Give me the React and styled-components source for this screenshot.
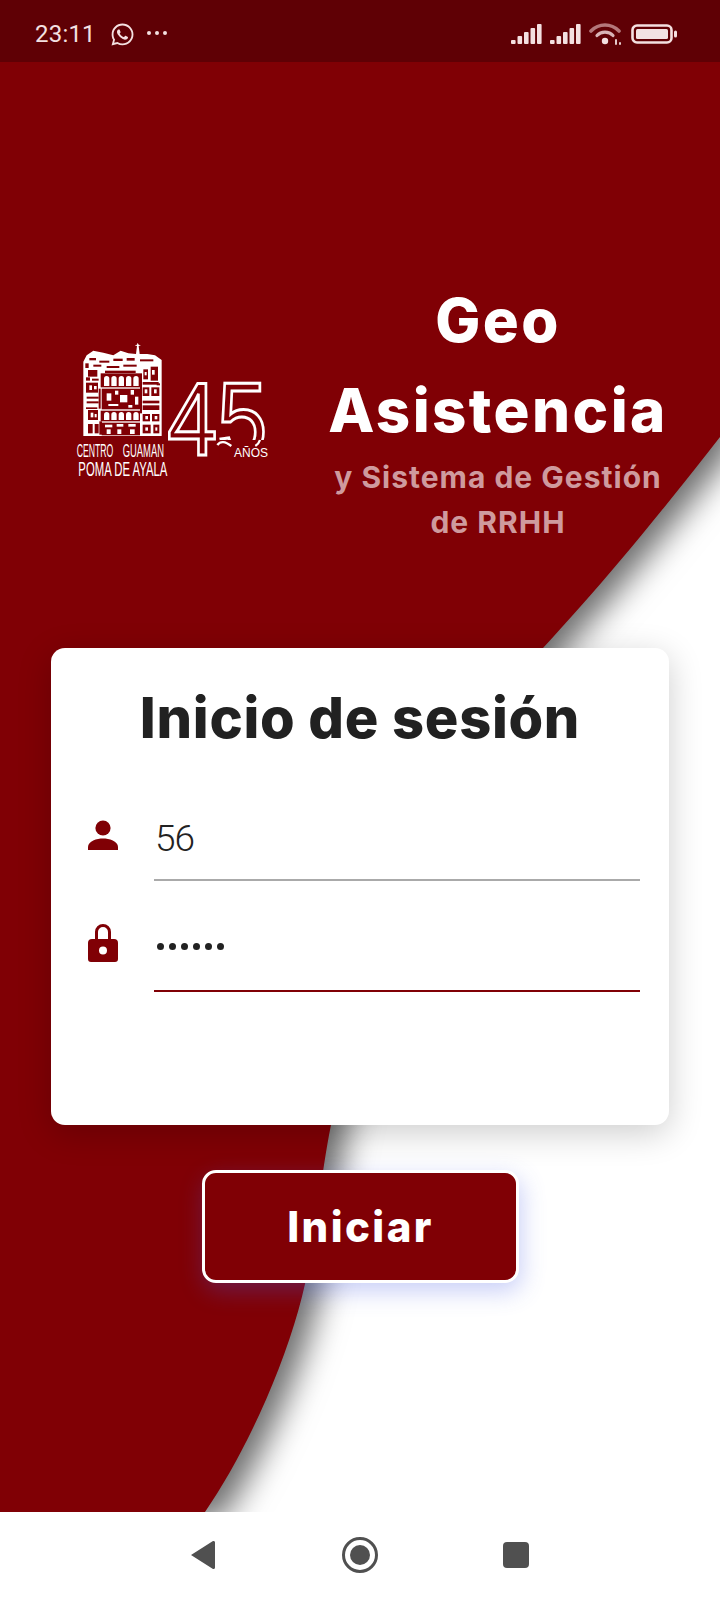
import React from 'react';
import styled, { createGlobalStyle } from 'styled-components';
import { FaWhatsapp } from 'react-icons/fa';

const RED = '#800005';

const GlobalStyle = createGlobalStyle`
  html, body {
    margin: 0;
    padding: 0;
    background: #fff;
  }
  body {
    font-family: "Inter", "Liberation Sans", sans-serif;
  }
`;

const Screen = styled.div`
  width: 720px;
  height: 1600px;
  display: flex;
  flex-direction: column;
  overflow: hidden;
`;

const StatusBar = styled.div`
  position: relative;
  z-index: 2;
  height: 62px;
  flex: none;
  background: #5f0005;
  display: flex;
  align-items: center;
  padding: 6px 43px 0 35px;
  color: #f4e0e1;
  box-sizing: border-box;
`;

const Time = styled.span`
  font-family: "Roboto", sans-serif;
  font-size: 24px;
  letter-spacing: 0.2px;
`;

const WhatsApp = styled(FaWhatsapp)`
  font-size: 25px;
  margin-left: 14px;
`;

const Dots = styled.div`
  display: flex;
  gap: 4px;
  margin-left: 12px;
  margin-bottom: 3px;
`;

const Dot = styled.i`
  width: 4px;
  height: 4px;
  border-radius: 50%;
  background: currentColor;
`;

const StatusRight = styled.div`
  margin-left: auto;
  margin-top: -1px;
  display: flex;
  align-items: center;
  gap: 8px;
`;

const Main = styled.main`
  position: relative;
  flex: 1;
  overflow: hidden;
  display: flex;
  flex-direction: column;
  align-items: center;
  background: #fff;
`;

const Curve = styled.svg`
  position: absolute;
  left: 0;
  top: 0;
  width: 720px;
  height: 1450px;
  overflow: visible;
  filter: drop-shadow(15px 9px 16px rgba(0, 0, 0, 0.58));
`;

const Hero = styled.section`
  position: relative;
  width: 720px;
  height: 586px;
  flex: none;
  display: flex;
  align-items: flex-start;
  box-sizing: border-box;
  padding-top: 213px;
`;

const LogoBox = styled.svg`
  width: 230px;
  height: 160px;
  flex: none;
  margin: 55px 0 0 60px;
`;

const TitleCol = styled.div`
  width: 360px;
  margin-left: 28px;
  text-align: center;
  color: #fff;
`;

const Title = styled.h1`
  margin: 0;
  font-size: 60px;
  font-weight: 800;
  line-height: 90px;
  letter-spacing: 2.4px;
`;

const Subtitle = styled.p`
  margin: 0;
  font-size: 30px;
  font-weight: 700;
  line-height: 45px;
  letter-spacing: 1px;
  color: #cf9a9e;
`;

const Card = styled.section`
  position: relative;
  width: 618px;
  height: 477px;
  flex: none;
  box-sizing: border-box;
  padding: 40px 29px 0 35px;
  background: #fff;
  border-radius: 14px;
  box-shadow: 0 8px 34px rgba(0, 0, 0, 0.2);
`;

const CardTitle = styled.h2`
  margin: 0 0 55px -6px;
  font-size: 56px;
  font-weight: 800;
  line-height: 60px;
  letter-spacing: 0.7px;
  color: #212121;
  text-align: center;
`;

const Field = styled.div`
  display: flex;
  align-items: flex-start;
  gap: 36px;
  height: 111px;
`;

const FieldIcon = styled.svg`
  width: 32px;
  height: 40px;
  flex: none;
  margin-top: ${(p) => p.$top}px;
  margin-left: 1px;
  margin-right: -1px;
  fill: ${RED};
`;

const FieldInput = styled.div`
  flex: 1;
  height: 78px;
  box-sizing: border-box;
  border-bottom: 2px solid ${(p) => (p.$active ? RED : '#aaaaaa')};
  padding-left: 1px;
  font-family: "Roboto", sans-serif;
  font-weight: 300;
  font-size: 37px;
  line-height: 71px;
  letter-spacing: -1px;
  color: #222;
`;

const PassDots = styled.div`
  display: flex;
  gap: 5px;
  padding: 29px 0 0 2px;
`;

const PassDot = styled.i`
  width: 7px;
  height: 7px;
  border-radius: 50%;
  background: #222;
`;

const LoginButton = styled.button`
  position: relative;
  width: 317px;
  height: 113px;
  flex: none;
  margin: 45px 0 0 1px;
  border: 3px solid #fff;
  border-radius: 14px;
  background: ${RED};
  color: #fff;
  font-family: inherit;
  font-size: 42px;
  font-weight: 800;
  letter-spacing: 2.4px;
  box-shadow: 2px 8px 24px rgba(70, 90, 230, 0.3);
`;

const NavBar = styled.nav`
  position: relative;
  z-index: 2;
  height: 88px;
  flex: none;
  background: #fff;
  display: flex;
  align-items: center;
  justify-content: center;
  gap: 116px;
  padding-bottom: 3px;
  box-sizing: border-box;
`;

const NavIcon = styled.svg`
  width: 40px;
  height: 40px;
  fill: #505050;
`;

const bars = [
  [0, 16, 4],
  [6.5, 12, 8],
  [13, 8, 12],
  [19.5, 4, 16],
  [26, 0, 20],
];

const Signal = () => (
  <svg width="31" height="20" viewBox="0 0 31 20" fill="#f4e0e1">
    {bars.map(([x, y, h]) => (
      <rect key={x} x={x} y={y} width="4.6" height={h} rx="1" />
    ))}
  </svg>
);

const Wifi = () => (
  <svg width="34" height="22" viewBox="0 0 34 22" fill="none" strokeLinecap="round">
    <path d="M2 8C10 0 22 0 30 8" strokeWidth="3.6" stroke="#b4777b" />
    <path d="M8 12.500C12 8 20 8 24 12.500" strokeWidth="3.2" stroke="#d9b4b7" />
    <circle cx="16" cy="18" r="3.200" fill="#f4e0e1" />
    <path d="M27 17v4M31 20v1" strokeWidth="1.800" stroke="#f4e0e1" />
  </svg>
);

const Battery = () => (
  <svg width="46" height="20" viewBox="0 0 46 20">
    <rect x="1.500" y="1.500" width="39" height="17" rx="4.500" fill="none" stroke="#f4e0e1" strokeWidth="2.600" />
    <rect x="5" y="5" width="32" height="10" rx="1.500" fill="#f2e2e3" />
    <rect x="43" y="6.500" width="3" height="7" rx="1.500" fill="#f4e0e1" />
  </svg>
);

const arches = [132, 154, 176, 198, 220];
const flecksA = [
  [140, 190, 14, 22], [165, 182, 10, 12], [180, 195, 22, 22], [212, 180, 10, 14],
  [225, 200, 10, 24], [145, 222, 30, 6], [205, 225, 12, 8],
];
const flecksB = [
  [135, 284, 22, 8], [170, 282, 20, 8], [205, 282, 22, 8], [140, 298, 12, 14],
  [172, 298, 12, 14], [210, 298, 14, 14],
];
const sideBlocks = [
  [78, 158, 36, 30], [80, 200, 36, 6], [80, 214, 36, 6], [84, 240, 30, 30], [84, 282, 14, 28],
  [104, 282, 12, 28], [248, 172, 20, 26], [274, 172, 24, 26], [248, 212, 50, 8], [248, 226, 50, 14],
  [248, 252, 22, 22], [276, 252, 22, 22], [248, 284, 24, 26], [280, 284, 18, 26],
  [250, 118, 14, 30], [272, 110, 22, 42], [84, 120, 28, 20],
];
const hills = [
  [88, 84, 20, 7], [118, 92, 30, 6], [160, 86, 28, 7], [200, 84, 24, 8], [240, 88, 40, 6],
  [100, 104, 24, 6], [140, 108, 38, 6], [190, 104, 40, 6], [135, 122, 92, 7],
  [78, 142, 12, 10], [96, 146, 20, 6], [116, 176, 6, 60], [78, 232, 34, 5], [118, 274, 8, 40],
  [240, 130, 6, 120], [248, 156, 48, 8], [76, 100, 10, 14], [290, 160, 10, 6],
];
// white specks that break up the dark side panels
const specks = [
  [88, 166, 8, 14], [102, 168, 8, 10], [92, 248, 8, 14], [104, 252, 6, 10], [254, 178, 8, 12],
  [282, 178, 8, 12], [256, 258, 8, 10], [284, 258, 8, 10], [256, 292, 8, 10], [286, 292, 6, 10],
  [276, 120, 8, 14], [254, 126, 6, 10],
];

const Logo = () => (
  <LogoBox viewBox="0 0 690 480">
    <path
      d="M70 95L80 76 100 62 130 68 160 76 182 62 205 70 228 72 231 48 224 46 231 44 233 38 236 44 243 46 236 48 239 72 262 72 285 76 305 90V318H70Z"
      fill="#fff"
    />
    {hills.concat(sideBlocks).map(([x, y, w, h]) => (
      <rect key={`${x}-${y}`} x={x} y={y} width={w} height={h} fill={RED} />
    ))}
    <rect x="122" y="130" width="118" height="42" fill={RED} />
    <rect x="125" y="176" width="115" height="62" fill={RED} />
    <rect x="122" y="242" width="118" height="32" fill={RED} />
    <rect x="125" y="278" width="115" height="38" fill={RED} />
    {arches.map((x) => (
      <g key={x} fill="#fff">
        <path d={`M${x} 168V146a8 8 0 0 1 16 0V168Z`} />
        <path d={`M${x} 270V254a8 8 0 0 1 16 0V270Z`} />
      </g>
    ))}
    {flecksA.concat(flecksB, specks).map(([x, y, w, h]) => (
      <rect key={`${x}-${y}`} x={x} y={y} width={w} height={h} fill="#fff" />
    ))}
    <g fill="#fff" fontFamily="Liberation Sans, sans-serif" fontSize="54">
      <text x="50" y="380" textLength="110" lengthAdjust="spacingAndGlyphs">CENTRO</text>
      <text x="188" y="380" textLength="124" lengthAdjust="spacingAndGlyphs">GUAMAN</text>
      <text x="55" y="438" fontSize="62" textLength="267" lengthAdjust="spacingAndGlyphs">POMA DE AYALA</text>
    </g>
    <text
      x="322"
      y="376"
      fontFamily="Liberation Sans, sans-serif"
      fontSize="310"
      textLength="300"
      lengthAdjust="spacingAndGlyphs"
      fill="none"
      stroke="#fff"
      strokeWidth="9"
    >
      45
    </text>
    <rect x="478" y="330" width="150" height="62" fill={RED} />
    <path d="M472 345Q486 326 514 348" fill="none" stroke="#fff" strokeWidth="7" />
    <path d="M600 330Q596 342 586 348" fill="none" stroke="#fff" strokeWidth="7" />
    <text
      x="522"
      y="382"
      fill="#fff"
      fontFamily="Liberation Sans, sans-serif"
      fontSize="40"
      textLength="102"
      lengthAdjust="spacingAndGlyphs"
    >
      AÑOS
    </text>
  </LogoBox>
);

const App = () => (
  <Screen>
    <GlobalStyle />
    <StatusBar>
      <Time>23:11</Time>
      <WhatsApp />
      <Dots>
        <Dot />
        <Dot />
        <Dot />
      </Dots>
      <StatusRight>
        <Signal />
        <Signal />
        <Wifi />
        <Battery />
      </StatusRight>
    </StatusBar>
    <Main>
      <Curve viewBox="0 0 720 1450">
        <path
          d="M720 375C650 465 595 530 543 586C430 710 365 900 331 1063C321 1111 315 1180 305 1222C290 1290 250 1385 205 1450L0 1450V0H720Z"
          fill={RED}
        />
      </Curve>
      <Hero>
        <Logo />
        <TitleCol>
          <Title>Geo</Title>
          <Title>Asistencia</Title>
          <Subtitle>
            y Sistema de Gestión
            <br />
            de RRHH
          </Subtitle>
        </TitleCol>
      </Hero>
      <Card>
        <CardTitle>Inicio de sesión</CardTitle>
        <Field>
          <FieldIcon $top={16} viewBox="0 0 32 40">
            <circle cx="16" cy="9" r="7.600" />
            <path d="M1 31v-3c0-6 9-8.500 15-8.500S31 22 31 28v3Z" />
          </FieldIcon>
          <FieldInput>56</FieldInput>
        </Field>
        <Field>
          <FieldIcon $top={8} viewBox="0 0 32 40">
            <path
              fillRule="evenodd"
              d="M8 17V10a8 8 0 0 1 16 0v7h3a4 4 0 0 1 4 4v16a3 3 0 0 1-3 3H4a3 3 0 0 1-3-3V21a4 4 0 0 1 4-4ZM11 17h10V10a5 5 0 0 0-10 0ZM16 24.500a4 4 0 1 0 0 8 4 4 0 0 0 0-8Z"
            />
          </FieldIcon>
          <FieldInput $active>
            <PassDots>
              <PassDot />
              <PassDot />
              <PassDot />
              <PassDot />
              <PassDot />
              <PassDot />
            </PassDots>
          </FieldInput>
        </Field>
      </Card>
      <LoginButton type="button">Iniciar</LoginButton>
    </Main>
    <NavBar>
      <NavIcon viewBox="0 0 40 40">
        <path d="M7 20 29 6a1.500 1.500 0 0 1 2 1.500v25a1.500 1.500 0 0 1-2 1.500Z" />
      </NavIcon>
      <NavIcon viewBox="0 0 40 40">
        <circle cx="20" cy="20" r="16.500" fill="none" stroke="#505050" strokeWidth="3" />
        <circle cx="20" cy="20" r="10" />
      </NavIcon>
      <NavIcon viewBox="0 0 40 40">
        <rect x="7" y="7" width="26" height="26" rx="4" />
      </NavIcon>
    </NavBar>
  </Screen>
);

export default App;
